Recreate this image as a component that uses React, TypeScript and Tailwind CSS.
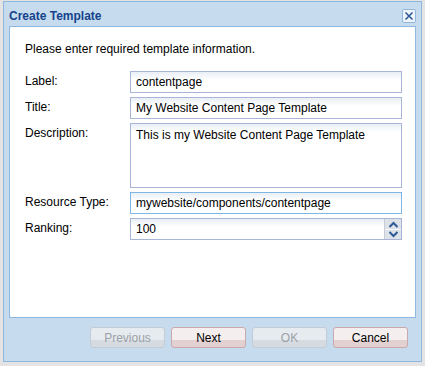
import React from "react";

const font = { fontFamily: "'Liberation Sans', Arial, sans-serif" };

function Field({ value, focused, spinner }: { value: string; focused?: boolean; spinner?: boolean }) {
  return (
    <div
      className={`relative h-[22px] w-[272px] border ${focused ? "border-[#7eb6e6]" : "border-[#a8b4d8]"} bg-[linear-gradient(#e9eff6,#ffffff_8px)] flex items-center pl-[5px] text-[12px] text-black`}
    >
      <span>{value}</span>
      {spinner && (
        <div className="absolute right-0 top-0 h-full w-[17px] border-l border-[#c8ccd8] bg-[#dde1e8] flex flex-col items-center justify-center">
          <svg width="11" height="8" viewBox="0 0 11 8"><path d="M1.5 6 L5.5 2 L9.5 6" fill="none" stroke="#2f5a98" strokeWidth="2" /></svg>
          <div className="h-px w-full bg-[#f6f7fa]" />
          <svg width="11" height="8" viewBox="0 0 11 8"><path d="M1.5 2 L5.5 6 L9.5 2" fill="none" stroke="#2f5a98" strokeWidth="2" /></svg>
        </div>
      )}
    </div>
  );
}

function Btn({ label, disabled }: { label: string; disabled?: boolean }) {
  return (
    <div
      className={`h-[21px] w-[75px] rounded-[3px] border flex items-center justify-center text-[12px] ${
        disabled
          ? "border-[#c3ccd6] bg-[linear-gradient(#e6ebf0_62%,#d6dbe1_62%)] text-[#9aa0a6]"
          : "border-[#c9a9ab] bg-[linear-gradient(#f4eeee_62%,#e3d1d2_62%)] text-black"
      }`}
    >
      {label}
    </div>
  );
}

export default function App() {
  return (
    <div className="w-[425px] h-[366px] bg-[#e4e4e4] pt-[1px] pl-[3px]" style={font}>
      <div className="w-[419px] h-[361px] border border-[#8fb8e0] bg-[#c6dcee] flex flex-col px-[5px]">
        <div className="h-[24px] flex items-center justify-between">
          <span className="text-[12px] font-bold text-[#15428b] pt-[4px]">Create Template</span>
          <div className="w-[14px] h-[14px] mt-[3px] rounded-[2px] border border-[#8fb8e0] bg-[#eef4fa] flex items-center justify-center">
            <svg width="10" height="10" viewBox="0 0 10 10"><path d="M1.5 1.5 L8.5 8.5 M8.5 1.5 L1.5 8.5" stroke="#2f5a98" strokeWidth="1.6" /></svg>
          </div>
        </div>
        <div className="h-[292px] border border-[#8fb8e0] bg-white pl-[15px] pt-[15px] text-[12px] text-black">
          <div className="h-[14px] leading-[14px]">Please enter required template information.</div>
          <div className="mt-[15px] flex flex-col gap-[4px]">
            <div className="flex items-start">
              <div className="w-[105px] leading-[20px]">Label:</div>
              <Field value="contentpage" />
            </div>
            <div className="flex items-start">
              <div className="w-[105px] leading-[20px]">Title:</div>
              <Field value="My Website Content Page Template" />
            </div>
            <div className="flex items-start">
              <div className="w-[105px] leading-[20px]">Description:</div>
              <div className="h-[65px] w-[272px] border border-[#a8b4d8] bg-[linear-gradient(#e9eff6,#ffffff_8px)] pl-[5px] pt-[3px] leading-[16px]">
                This is my Website Content Page Template
              </div>
            </div>
            <div className="flex items-start">
              <div className="w-[105px] leading-[20px]">Resource Type:</div>
              <Field value="mywebsite/components/contentpage" focused />
            </div>
            <div className="flex items-start">
              <div className="w-[105px] leading-[20px]">Ranking:</div>
              <Field value="100" spinner />
            </div>
          </div>
        </div>
        <div className="flex justify-end gap-[6px] pr-[8px] pt-[9px]">
          <Btn label="Previous" disabled />
          <Btn label="Next" />
          <Btn label="OK" disabled />
          <Btn label="Cancel" />
        </div>
      </div>
    </div>
  );
}
